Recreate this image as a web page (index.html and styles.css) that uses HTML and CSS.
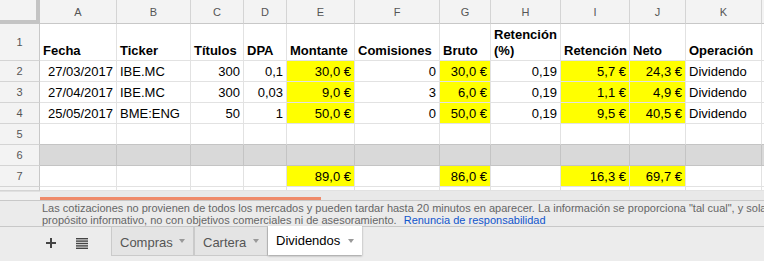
FILE: index.html
```html
<!DOCTYPE html>
<html lang="es">
<head>
<meta charset="utf-8">
<title>Dividendos</title>
<link rel="stylesheet" href="styles.css">
</head>
<body>
<div class="grid">
  <div class="corner"></div>
  <div class="ch">A</div><div class="ch">B</div><div class="ch">C</div><div class="ch">D</div><div class="ch">E</div><div class="ch">F</div><div class="ch">G</div><div class="ch">H</div><div class="ch">I</div><div class="ch">J</div><div class="ch">K</div><div class="ch"></div>

  <div class="rh">1</div>
  <div class="c hd">Fecha</div><div class="c hd">Ticker</div><div class="c hd">Títulos</div><div class="c hd">DPA</div><div class="c hd">Montante</div><div class="c hd">Comisiones</div><div class="c hd">Bruto</div><div class="c hd">Retención (%)</div><div class="c hd">Retención</div><div class="c hd">Neto</div><div class="c hd">Operación</div><div class="c"></div>

  <div class="rh">2</div>
  <div class="c r">27/03/2017</div><div class="c">IBE.MC</div><div class="c r">300</div><div class="c r">0,1</div><div class="c r y">30,0 €</div><div class="c r">0</div><div class="c r y">30,0 €</div><div class="c r">0,19</div><div class="c r y">5,7 €</div><div class="c r y">24,3 €</div><div class="c">Dividendo</div><div class="c"></div>

  <div class="rh">3</div>
  <div class="c r">27/04/2017</div><div class="c">IBE.MC</div><div class="c r">300</div><div class="c r">0,03</div><div class="c r y">9,0 €</div><div class="c r">3</div><div class="c r y">6,0 €</div><div class="c r">0,19</div><div class="c r y">1,1 €</div><div class="c r y">4,9 €</div><div class="c">Dividendo</div><div class="c"></div>

  <div class="rh">4</div>
  <div class="c r">25/05/2017</div><div class="c">BME:ENG</div><div class="c r">50</div><div class="c r">1</div><div class="c r y">50,0 €</div><div class="c r">0</div><div class="c r y">50,0 €</div><div class="c r">0,19</div><div class="c r y">9,5 €</div><div class="c r y">40,5 €</div><div class="c">Dividendo</div><div class="c"></div>

  <div class="rh">5</div>
  <div class="c pre"></div><div class="c pre"></div><div class="c pre"></div><div class="c pre"></div><div class="c pre"></div><div class="c pre"></div><div class="c pre"></div><div class="c pre"></div><div class="c pre"></div><div class="c pre"></div><div class="c pre"></div><div class="c pre"></div>

  <div class="rh">6</div>
  <div class="c gr"></div><div class="c gr"></div><div class="c gr"></div><div class="c gr"></div><div class="c gr"></div><div class="c gr"></div><div class="c gr"></div><div class="c gr"></div><div class="c gr"></div><div class="c gr"></div><div class="c gr"></div><div class="c gr"></div>

  <div class="rh">7</div>
  <div class="c"></div><div class="c"></div><div class="c"></div><div class="c"></div><div class="c r y">89,0 €</div><div class="c"></div><div class="c r y">86,0 €</div><div class="c"></div><div class="c r y">16,3 €</div><div class="c r y">69,7 €</div><div class="c"></div><div class="c"></div>

  <div class="rh"></div>
  <div class="c"></div><div class="c"></div><div class="c"></div><div class="c"></div><div class="c"></div><div class="c"></div><div class="c"></div><div class="c"></div><div class="c"></div><div class="c"></div><div class="c"></div><div class="c"></div>
</div>

<div class="hscroll">
  <div class="hs-left"></div>
  <div class="hs-track"><div class="hs-thumb"></div></div>
</div>

<div class="disclaimer">
  <div class="line">Las cotizaciones no provienen de todos los mercados y pueden tardar hasta 20 minutos en aparecer. La información se proporciona "tal cual", y solamente con</div>
  <div class="line">propósito informativo, no con objetivos comerciales ni de asesoramiento. <a class="link" href="#">Renuncia de responsabilidad</a></div>
</div>

<div class="tabbar">
  <svg class="plus" width="10" height="10" viewBox="0 0 10 10"><rect x="4" y="0" width="2" height="10" fill="#444"/><rect x="0" y="4" width="10" height="2" fill="#444"/></svg>
  <svg class="list" width="12" height="11" viewBox="0 0 12 11"><rect x="0" y="0" width="12" height="1.4" fill="#444"/><rect x="0" y="2.4" width="12" height="1.4" fill="#444"/><rect x="0" y="4.8" width="12" height="1.4" fill="#444"/><rect x="0" y="7.2" width="12" height="1.4" fill="#444"/><rect x="0" y="9.6" width="12" height="1.4" fill="#444"/></svg>
  <div class="tabs">
    <div class="tab t1"><span>Compras</span><span class="arrow"></span></div>
    <div class="tab t2"><span>Cartera</span><span class="arrow"></span></div>
    <div class="tab t3 active"><span>Dividendos</span><span class="arrow"></span></div>
  </div>
</div>
</body>
</html>
```

FILE: styles.css
```css
html, body {
  margin: 0;
  padding: 0;
}
body {
  width: 764px;
  height: 261px;
  overflow: hidden;
  background: #ffffff;
  font-family: "Liberation Sans", Arial, sans-serif;
  color: #000;
}

.grid {
  display: grid;
  grid-template-columns: 40px 77px 74px 53px 43px 68px 85px 51px 70px 69px 56px 76px 1fr;
  grid-template-rows: 24px 37px 21px 21px 21px 21px 21px 21px 4px;
  overflow: hidden;
}

.corner {
  box-sizing: border-box;
  background: #f3f3f3;
  border-right: 4px solid #c4c4c4;
  border-bottom: 4px solid #c4c4c4;
}

.ch {
  box-sizing: border-box;
  background: #f3f3f3;
  border-right: 1px solid #d4d4d4;
  border-bottom: 1px solid #c8c8c8;
  display: flex;
  align-items: center;
  justify-content: center;
  font-size: 11px;
  color: #555;
}

.rh {
  box-sizing: border-box;
  background: #f3f3f3;
  border-right: 1px solid #c8c8c8;
  border-bottom: 1px solid #d4d4d4;
  display: flex;
  align-items: center;
  justify-content: center;
  font-size: 11px;
  color: #555;
}

.c {
  box-sizing: border-box;
  border-right: 1px solid #e2e2e2;
  border-bottom: 1px solid #e2e2e2;
  padding: 0 3px 2px 3px;
  display: flex;
  align-items: flex-end;
  font-size: 13px;
  line-height: 15px;
  white-space: nowrap;
  overflow: hidden;
}

.r { justify-content: flex-end; }

.hd {
  font-weight: bold;
  white-space: normal;
  line-height: 16px;
  padding-bottom: 1.5px;
}

.y { background: #ffff00; }

.pre { border-bottom-color: #c4c4c4; }

.gr {
  background: #d9d9d9;
  border-right-color: #c4c4c4;
  border-bottom-color: #c4c4c4;
}

.hscroll {
  display: flex;
  height: 10px;
  box-sizing: border-box;
  border-bottom: 1px solid #c8c8c8;
}
.hs-left {
  width: 40px;
  background: #f1f1f1;
  border-top: 1px solid #e0e0e0;
  box-sizing: border-box;
}
.hs-track {
  flex: 1;
  background: #e9e9e9;
  display: flex;
  flex-direction: column;
  justify-content: flex-end;
}
.hs-thumb {
  width: 281px;
  height: 3px;
  background: #ef8a6a;
}

.disclaimer {
  background: #ebebeb;
  padding: 1px 0 0 42px;
  height: 25px;
  box-sizing: border-box;
  font-size: 11px;
  line-height: 12px;
  color: #666;
  overflow: hidden;
}
.line { white-space: nowrap; }
.link {
  color: #1155cc;
  text-decoration: none;
  margin-left: 4px;
}

.tabbar {
  display: flex;
  align-items: flex-start;
  height: 35px;
  box-sizing: border-box;
  border-top: 1px solid #c8c8c8;
  background: #ececec;
  padding-left: 46px;
}
.plus { margin-top: 11px; display: block; }
.list { margin-top: 11px; margin-left: 20px; display: block; }
.tabs {
  display: flex;
  margin-left: 23px;
}
.tab {
  box-sizing: border-box;
  height: 29px;
  display: flex;
  align-items: center;
  padding: 0 8px 0 8px;
  background: #e4e4e4;
  border: 1px solid #cacaca;
  border-top: none;
  font-size: 13px;
  color: #555;
}
.t1 { width: 83px; }
.t2 { width: 74px; }
.t3 { width: 94px; }
.tab span:first-child { padding-top: 2px; }
.arrow {
  margin-left: auto;
  width: 0;
  height: 0;
  border-left: 3.5px solid transparent;
  border-right: 3.5px solid transparent;
  border-top: 4px solid #999;
}
.active {
  background: #ffffff;
  color: #000;
  margin-top: -1px;
  height: 29px;
  border: none;
  box-shadow: 0 1px 2px rgba(0,0,0,0.35);
}
.active span:first-child { padding-top: 0; }
```
